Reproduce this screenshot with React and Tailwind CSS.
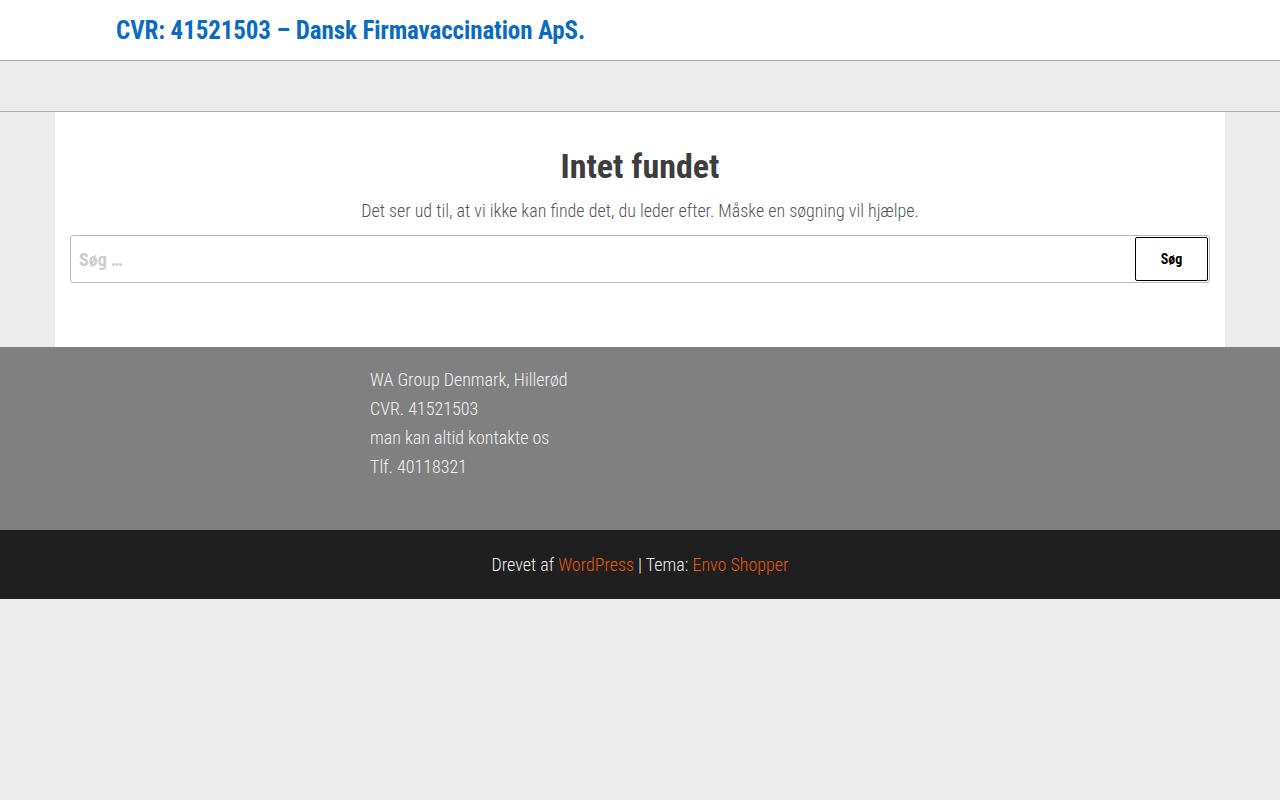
import React from "react";

const FONT = "font-['Roboto_Condensed','Liberation_Sans_Narrow',Roboto,sans-serif]";

export default function App() {
  return (
    <div className={`min-h-[800px] bg-[#ececec] ${FONT}`}>
      {/* header */}
      <header className="h-[61px] bg-white border-b border-[#aaaaaa] flex items-center pt-[2px]">
        <a href="#" className="ml-[116px] text-[25px] font-bold text-[#0b6bbf] tracking-[-0.1px]">
          CVR: 41521503 – Dansk Firmavaccination ApS.
        </a>
      </header>

      {/* menu band */}
      <div className="h-[51px] border-b border-[#aaaaaa]"></div>

      {/* content */}
      <main className="mx-[55px] bg-white px-[15px] pt-[33px] pb-[64px] text-center">
        <h1 className="text-[34px] leading-[42px] font-bold text-[#3d3d3d]">Intet fundet</h1>
        <p className="mt-[12px] text-[18px] leading-[24px] font-light text-[#555555]">
          Det ser ud til, at vi ikke kan finde det, du leder efter. Måske en søgning vil hjælpe.
        </p>
        <form className="mt-[12px] h-[48px] flex items-center border border-[#bbbbbb] rounded-[3px] pl-[8px] pr-[1px]">
          <input
            type="search"
            placeholder="Søg …"
            className="flex-1 h-full text-[18px] font-bold text-[#333] placeholder:text-[#cccccc] outline-none bg-transparent"
          />
          <button type="button" className="w-[73px] h-[44px] border border-black rounded-[2px] text-[14px] font-bold text-black bg-white">
            Søg
          </button>
        </form>
      </main>

      {/* widgets footer */}
      <section className="bg-[#808080] h-[183px] pt-[18px]">
        <div className="ml-[370px] text-[18px] leading-[29px] font-light text-[#f2f2f2]">
          <div>WA Group Denmark, Hillerød</div>
          <div>CVR. 41521503</div>
          <div>man kan altid kontakte os</div>
          <div>Tlf. 40118321</div>
        </div>
      </section>

      {/* credits */}
      <footer className="bg-[#1f1f1f] h-[69px] flex items-center justify-center text-[18px] font-light text-[#eeeeee]">
        <span>
          Drevet af <a href="#" className="text-[#e8590c]">WordPress</a> | Tema: <a href="#" className="text-[#e8590c]">Envo Shopper</a>
        </span>
      </footer>
    </div>
  );
}
